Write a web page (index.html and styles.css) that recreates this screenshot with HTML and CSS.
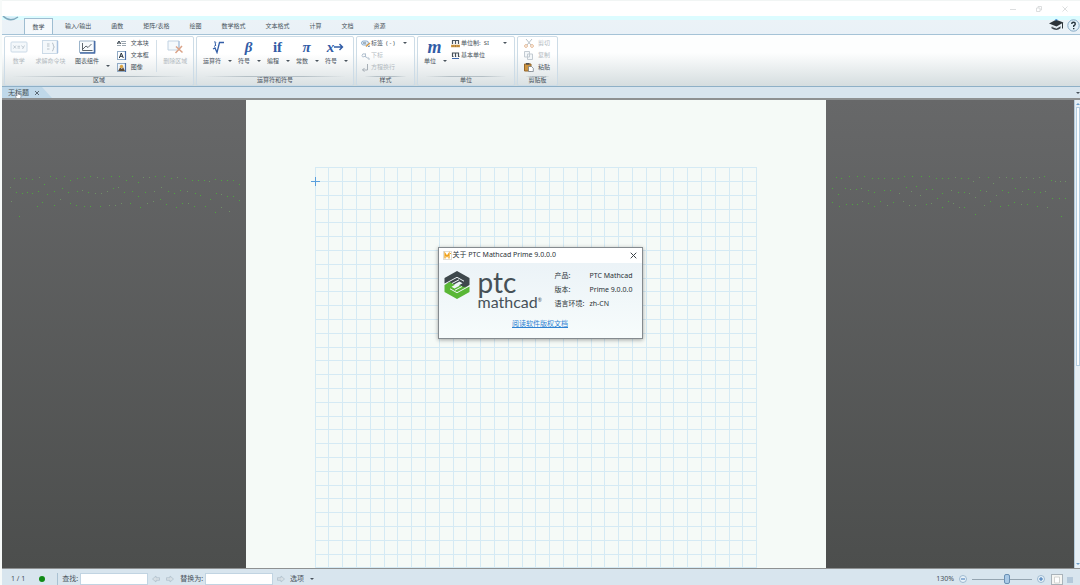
FILE: index.html
```html
<!DOCTYPE html>
<html lang="zh-CN">
<head>
<meta charset="utf-8">
<title>PTC Mathcad Prime</title>
<link rel="stylesheet" href="styles.css">
</head>
<body>
<div class="app">
  <header class="titlebar">
    <button class="win" aria-label="最小化"><svg width="6" height="6" viewBox="0 0 6 6"><path d="M0 3.5H6"/></svg></button>
    <button class="win" aria-label="还原"><svg width="6" height="6" viewBox="0 0 6 6"><path d="M.5 2H4V5.5H.5ZM2 2V.5H5.5V4H4"/></svg></button>
    <button class="win" aria-label="关闭"><svg width="6" height="6" viewBox="0 0 6 6"><path d="M.5.5 5.500 5.500M5.500.5.5 5.500"/></svg></button>
  </header>

  <nav class="tabs">
    <svg class="orb" width="18" height="6" viewBox="0 0 18 6"><path d="M1 0Q8 7 16 1" fill="#d5edf7" stroke="#7fa9bd" stroke-width="1.500"/></svg>
    <button class="tab active">数学</button>
    <button class="tab">输入/输出</button>
    <button class="tab">函数</button>
    <button class="tab">矩阵/表格</button>
    <button class="tab">绘图</button>
    <button class="tab">数学格式</button>
    <button class="tab">文本格式</button>
    <button class="tab">计算</button>
    <button class="tab">文档</button>
    <button class="tab">资源</button>
    <span class="spacer"></span>
    <button class="plain" aria-label="学习"><svg width="15" height="12" viewBox="0 0 15 12"><path d="M0 4.500 7 .8 14.500 3.500 7.500 7.500Z" fill="#2d3338"/><path d="M2.500 7 7.500 9.300 11.500 7V9.300Q7.500 12.500 2.500 9.300Z" fill="#3b4248"/><path d="M2 7.300 7.500 9.200 12 6.500" stroke="#eaf2f8" stroke-width=".8" fill="none"/><path d="M13.500 4V9.500" stroke="#2d3338" fill="none"/><path d="M6 1.300 7 .6 8.500 1" stroke="#3b86d8" fill="none"/></svg></button>
    <button class="plain" aria-label="帮助"><svg width="13" height="13" viewBox="0 0 13 13"><circle cx="6.500" cy="6.500" r="5.700" fill="#e3f0f9" stroke="#86a9c4"/><path d="M4.700 5Q4.700 3.300 6.500 3.300T8.300 5Q8.300 6 6.700 6.800V8M6.700 9V10.300" fill="none" stroke="#28353f" stroke-width="1.400"/></svg></button>
  </nav>

  <main class="ribbon">
    <section class="group g-region">
      <div class="tools">
        <button class="big w28 off"><svg width="18" height="14" viewBox="0 0 18 14"><rect x="1" y="2" width="16" height="10" rx="1" fill="#f4f8fb" stroke="#cbdae7"/><path d="M3.500 5.500 6 8.500M6 5.500 3.500 8.500M7.500 6.300H10M7.500 8H10M11.500 5.500 13 7.500M14.500 5.500 12.500 9" stroke="#b3bec8" fill="none" stroke-width=".8"/></svg><span>数学</span></button>
        <button class="big w36 off"><svg width="17" height="14" viewBox="0 0 17 14"><rect x=".5" y=".5" width="15" height="13" fill="#f4f8fb" stroke="#cbdae7"/><path d="M15.500 1V13" stroke="#a9c2df" stroke-width="1.500"/><path d="M5 4H7.500M5 6H7.500M5 9H7.500M10 3Q11.300 3 11.300 5T12.500 7Q11.300 7 11.300 9T10 11" stroke="#a9b4be" fill="none" stroke-width=".8"/></svg><span>求解命令块</span></button>
        <button class="big w40"><svg width="17" height="14" viewBox="0 0 17 14"><path d="M.5 1H16V12.500H.5Z" fill="#f8fbfd" stroke="#9db5cb"/><path d="M15.500 1V13H1" fill="none" stroke="#486da8" stroke-width="1.500"/><path d="M3.500 3V10.500H13.500M4 9 7 6 9 7.500 12.500 4" fill="none" stroke="#4d565e" stroke-width=".9"/></svg><span>图表组件</span></button>
        <i class="caret low"></i>
        <div class="stack s-text">
          <button class="small"><svg width="10" height="9" viewBox="0 0 10 9"><path d="M4 2.500H9M5 4.500H9M5 6.500H9M0 6.500H4" stroke="#99a5af"/><path d="M0 5 2 2 4 5M.8 4H3" stroke="#37424c" fill="none"/></svg>文本块</button>
          <button class="small"><svg width="10" height="9" viewBox="0 0 10 9"><rect x=".5" y=".5" width="8" height="8" fill="#fff" stroke="#91abc6"/><path d="M8.500 0V9" stroke="#486da8" stroke-width="1.200"/><path d="M2.300 7 4.300 2 6.300 7M3 5.300H5.600" stroke="#26313b" fill="none"/></svg>文本框</button>
          <button class="small"><svg width="10" height="9" viewBox="0 0 10 9"><rect x=".5" y=".5" width="8" height="8" fill="#eef3f8" stroke="#91abc6"/><path d="M8.500 0V9" stroke="#486da8" stroke-width="1.200"/><path d="M1 8 3 4.500 5 6 6 4 8 8Z" fill="#5b4a39"/><circle cx="4.500" cy="3.500" r="1.700" fill="#dca544"/></svg>图像</button>
        </div>
        <i class="rule"></i>
        <button class="big w36 off"><svg width="17" height="14" viewBox="0 0 17 14"><path d="M1 1H12V10H1Z" fill="#f5f9fc" stroke="#c1d2e2"/><path d="M12 1V10" stroke="#a0bad8"/><path d="M9 6.500 15.500 12.500M15 6 8.500 13" stroke="#dba388" stroke-width="1.500"/></svg><span>删除区域</span></button>
      </div>
      <h2>区域</h2>
    </section>

    <section class="group g-oper">
      <div class="tools">
        <button class="split w32"><svg width="16" height="14" viewBox="0 0 16 14"><path d="M3 9 5 8 7 12.500 9.500 2.500H14" fill="none" stroke="#345fa8" stroke-width="1.300"/><path d="M4 2Q7 1.500 5 4 7.500 5 4 6.500" fill="none" stroke="#345fa8"/></svg><span>运算符<i class="caret"></i></span></button>
        <button class="split"><b class="sym it">β</b><span>符号<i class="caret"></i></span></button>
        <button class="split"><b class="sym">if</b><span>编程<i class="caret"></i></span></button>
        <button class="split"><b class="sym it">π</b><span>常数<i class="caret"></i></span></button>
        <button class="split"><b class="sym"><em>x</em><svg width="10" height="8" viewBox="0 0 10 8"><path d="M0 4H8M5.500 1 8.500 4 5.500 7" fill="none" stroke="#315ca6" stroke-width="1.400"/></svg></b><span>符号<i class="caret"></i></span></button>
      </div>
      <h2>运算符和符号</h2>
    </section>

    <section class="group g-style">
      <div class="stack">
        <button class="small"><svg width="10" height="9" viewBox="0 0 10 9"><rect x=".5" y="2" width="7" height="4" rx="2" fill="#e3edf6" stroke="#8daed0"/><path d="M2 4H5" stroke="#627889"/><path d="M5 7.500 9 4" stroke="#d79d4b" stroke-width="1.500"/><path d="M7 7.500 9 7" stroke="#5482b8"/></svg>标签&nbsp; ( - )<i class="caret"></i></button>
        <button class="small off"><svg width="10" height="9" viewBox="0 0 10 9"><path d="M4.500 3Q1 2 1 4.500T4.500 5M4.500 2.500V6L6 6.500M7 6V8H9" fill="none" stroke="#b0bfce"/></svg>下标</button>
        <button class="small off"><svg width="10" height="9" viewBox="0 0 10 9"><path d="M6.500 1V7H1.500M3.500 5 1.500 7 3.500 8.500" fill="none" stroke="#a7afb6"/></svg>方程换行</button>
      </div>
      <h2>样式</h2>
    </section>

    <section class="group g-unit">
      <div class="tools">
        <button class="split"><b class="sym it">m</b><span>单位<i class="caret"></i></span></button>
        <div class="stack">
          <button class="small"><svg width="9" height="9" viewBox="0 0 9 9"><path d="M1.500 5V1.500H7.500V5M4.500 1.500V5" fill="none" stroke="#4a5560" stroke-width="1.200"/><path d="M0 7H9" stroke="#d29a44" stroke-width="2.500"/><path d="M2 6V8M4.500 6V8M7 6V8" stroke="#8a6a3c" stroke-width=".6"/></svg>单位制:&nbsp; SI<i class="caret"></i></button>
          <button class="small"><svg width="9" height="9" viewBox="0 0 9 9"><path d="M1.500 5.500V2H7.500V5.500M4.500 2V5.500M1 5.500H2.500M4 5.500H5.200M7 5.500H8.500" fill="none" stroke="#45505a" stroke-width="1.200"/><path d="M1 7.500H8" stroke="#3e68ad"/></svg>基本单位</button>
        </div>
      </div>
      <h2>单位</h2>
    </section>

    <section class="group g-clip">
      <div class="stack">
        <button class="small off"><svg width="10" height="9" viewBox="0 0 10 9"><path d="M2 0 7 6M8 0 3 6" stroke="#b6c0c8" fill="none"/><circle cx="2" cy="7" r="1.400" fill="none" stroke="#e4b894"/><circle cx="8" cy="7" r="1.400" fill="none" stroke="#e4b894"/></svg>剪切</button>
        <button class="small off"><svg width="10" height="9" viewBox="0 0 10 9"><path d="M.5.5H5.500V6H.5ZM3.500 3H8.500V8.500H3.500Z" fill="#f4f7f9" stroke="#c3cbd2"/></svg>复制</button>
        <button class="small"><svg width="10" height="9" viewBox="0 0 10 9"><path d="M.5 1H7V8H.5Z" fill="#cd9440" stroke="#94662a"/><path d="M2 .8H5.500" stroke="#4b4d50" stroke-width="1.500"/><path d="M4.500 3.500H7.500L9.300 5.300V8.500H4.500Z" fill="#fff" stroke="#68747f" stroke-width=".7"/></svg>粘贴</button>
      </div>
      <h2>剪贴板</h2>
    </section>
  </main>

  <div class="docbar">
    <div class="doctab">无标题<button class="plain" aria-label="关闭标签"><svg width="6" height="6" viewBox="0 0 6 6"><path d="M1 1 5 5M5 1 1 5" stroke="#4e5b66" fill="none" stroke-width=".9"/></svg></button>
      <svg class="hand" width="7" height="8" viewBox="0 0 7 8"><path d="M2 0H3V3L6 4V6L5 8H2L0 5V4L2 5Z" fill="#fff" stroke="#5b6268" stroke-width=".5"/></svg>
    </div>
    <i class="caret"></i>
  </div>

  <div class="work">
    <div class="gutter">
      <svg width="244" height="47" viewBox="6 40 732 141"><path class="dots" d="M42 55h3M60 55h3M78 55h3M96 58h3M132 73h3M150 49h3M168 55h3M192 49h3M210 61h3M231 55h3M252 52h3M270 49h3M309 55h3M333 49h3M357 49h3M378 61h3M396 49h3M414 67h3M465 49h3M492 49h3M513 55h3M555 55h3M576 61h3M594 61h3M612 61h3M645 58h3M663 61h3M681 61h3M699 61h3M717 73h3M48 97h3M66 100h3M81 97h3M96 100h3M114 94h3M141 103h3M162 94h3M186 85h3M204 97h3M231 94h3M264 97h3M339 85h3M372 97h3M396 94h3M414 109h3M435 97h3M504 94h3M522 100h3M540 91h3M585 100h3M600 106h3M630 118h3M648 100h3M681 109h3M699 109h3M717 121h3M57 169h3M111 139h3M126 127h3M162 136h3M210 130h3M228 136h3M252 139h3M270 139h3M300 139h3M390 130h3M420 142h3M480 118h3M498 133h3M528 142h3M546 130h3M582 139h3M615 139h3M645 157h3"/><path class="dots dim" d="M117 52h3M291 52h3M429 52h3M447 52h3M531 52h3M627 64h3M30 82h3M33 124h3M246 91h3M285 100h3M303 100h3M321 94h3M354 82h3M462 94h3M483 82h3M561 94h3M663 103h3M180 118h3M327 136h3M345 136h3M363 130h3M441 130h3M459 124h3M564 130h3M663 142h3M687 154h3"/></svg>
    </div>
    <article class="page">
      <div class="grid">
        <svg width="100%" height="100%"><defs><pattern id="cells" width="69" height="69" patternUnits="userSpaceOnUse"><path d="M.5 0V69M13.500 0V69M27.500 0V69M41.500 0V69M55.500 0V69M0 .5H69M0 14.500H69M0 28.500H69M0 42.500H69M0 55.500H69" stroke="#d5eaf4" fill="none"/></pattern></defs><rect width="100%" height="100%" fill="url(#cells)"/></svg>
        <svg class="cross" width="9" height="9" viewBox="0 0 9 9"><path d="M0 4.500H9M4.500 0V9" stroke="#5a9fdd"/></svg>
      </div>
    </article>
    <div class="gutter">
      <svg width="248" height="50" viewBox="378 70 744 150"><path class="dots" d="M408 82h3M423 85h3M447 79h3M471 79h3M492 79h3M516 85h3M534 85h3M552 85h3M576 85h3M594 85h3M612 79h3M636 79h3M663 79h3M687 79h3M708 85h3M726 85h3M744 85h3M783 85h3M804 85h3M864 82h3M936 85h3M1032 79h3M1053 91h3M396 115h3M414 133h3M435 115h3M468 118h3M504 121h3M522 127h3M552 121h3M570 121h3M618 112h3M648 109h3M678 118h3M696 118h3M726 130h3M774 127h3M792 127h3M840 121h3M906 121h3M924 127h3M945 115h3M984 118h3M1002 127h3M1020 127h3M1056 145h3M1077 145h3M1095 145h3M396 157h3M417 169h3M438 163h3M456 163h3M471 163h3M504 160h3M522 169h3M540 154h3M579 157h3M678 163h3M711 145h3M726 172h3M744 154h3M792 172h3M825 193h3M870 154h3M900 169h3M924 166h3M942 157h3M981 163h3M1011 169h3M1083 199h3"/><path class="dots dim" d="M765 82h3M819 94h3M837 82h3M879 100h3M897 82h3M918 82h3M960 82h3M978 82h3M999 85h3M1017 82h3M1065 94h3M1080 94h3M1095 94h3M450 118h3M483 115h3M597 130h3M633 124h3M660 136h3M753 121h3M807 130h3M825 142h3M858 124h3M888 136h3M966 124h3M1035 124h3M486 154h3M561 166h3M609 154h3M627 166h3M645 166h3M693 160h3M759 160h3M777 172h3M852 166h3M963 163h3M1041 172h3"/></svg>
    </div>
    <div class="scroll"><i class="caret up"></i><span class="thumb"></span><i class="caret blue"></i></div>
  </div>

  <footer class="status">
    <span class="pages">1 / 1</span><span class="led"></span><i class="sep"></i>
    <label for="find">查找:</label><input class="field" id="find" type="text">
    <button class="plain arrow" aria-label="上一个"><svg width="8" height="8" viewBox="0 0 8 8"><path d="M.5 4 4 1V2.700H7.500V5.300H4V7Z"/></svg></button>
    <button class="plain arrow" aria-label="下一个"><svg width="8" height="8" viewBox="0 0 8 8"><path d="M7.500 4 4 1V2.700H.5V5.300H4V7Z"/></svg></button>
    <label for="repl">替换为:</label><input class="field" id="repl" type="text">
    <button class="plain arrow" aria-label="替换"><svg width="8" height="8" viewBox="0 0 8 8"><path d="M7.500 4 4 1V2.700H.5V5.300H4V7Z"/></svg></button>
    <button class="plain options">选项<i class="caret"></i></button>
    <span class="spacer"></span>
    <label for="zoom">130%</label>
    <button class="plain zoombtn" aria-label="缩小"><svg width="8" height="8" viewBox="0 0 8 8"><circle cx="4" cy="4" r="3.500" fill="#e8f2f9" stroke="#9db9cf"/><path d="M2 4H6" stroke="#3a74b4"/></svg></button>
    <input class="zoom" id="zoom" type="range" min="0" max="100" value="60">
    <button class="plain zoombtn" aria-label="放大"><svg width="8" height="8" viewBox="0 0 8 8"><circle cx="4" cy="4" r="3.500" fill="#e8f2f9" stroke="#9db9cf"/><path d="M2 4H6M4 2V6" stroke="#3a74b4"/></svg></button>
    <button class="plain view on" aria-label="页面视图"><svg width="12" height="11" viewBox="0 0 12 11"><rect x=".5" y=".5" width="11" height="10" fill="#f6f6f3" stroke="#a9b3ba"/><path d="M3.500 3H8.500V9H3.500Z" fill="#fff" stroke="#d2d4d2"/></svg></button>
    <button class="plain view" aria-label="草稿视图"><svg width="12" height="11" viewBox="0 0 12 11"><rect x="3" y="3" width="6" height="6" fill="#b4c8da"/></svg></button>
  </footer>
</div>

<dialog class="about" open aria-labelledby="about-title">
  <div class="about-bar">
    <svg width="9" height="9" viewBox="0 0 9 9"><rect x=".5" y=".5" width="8" height="8" fill="#fff" stroke="#e0ddd5"/><path d="M2 7.500V2.500L4 5.500 6 2.500V7.500" fill="none" stroke="#efa21d" stroke-width="1.300"/><path d="M7 2.500H8" stroke="#efa21d"/></svg>
    <span id="about-title">关于 PTC Mathcad Prime 9.0.0.0</span>
    <button class="plain" aria-label="关闭"><svg width="7" height="7" viewBox="0 0 7 7"><path d="M.7.7 6.300 6.300M6.300.7.7 6.300" stroke="#3c4348" fill="none"/></svg></button>
  </div>
  <div class="about-body">
    <div class="brand">
      <svg width="26" height="28" viewBox="0 0 26 28"><path d="M13 0 25.500 7V14L20.500 17 15 14.200 18.500 12.200 15.500 10.500 9.500 13.800 6.500 12 .5 12.500V7Z" fill="#3e484c"/><path d="M13 28 .5 21V14L5.500 11 11 13.800 7.500 15.800 10.500 17.500 16.500 14.200 19.500 16 25.500 15.500V21Z" fill="#59b736"/><path d="M.5 13 13 6.300 20 10.200M25.500 15 13 21.700 6 17.800M8 12.500 15 8.800M18 15.500 11 19.200" fill="none" stroke="#eef4f7"/></svg>
      <div class="words"><span class="ptc">ptc</span><span class="mc">mathcad<sup>®</sup></span></div>
    </div>
    <dl class="facts">
      <dt>产品:</dt><dd>PTC Mathcad</dd>
      <dt>版本:</dt><dd>Prime 9.0.0.0</dd>
      <dt>语言环境:</dt><dd>zh-CN</dd>
    </dl>
  </div>
  <a class="legal" href="#copyright">阅读软件版权文档</a>
</dialog>
</body>
</html>
```
FILE: styles.css
```css
* { box-sizing: border-box; }
body {
  margin: 0;
  font: 6px/8px "Noto Sans", "Noto Sans CJK SC", sans-serif;
  color: #48525b;
  background: #f7faf9;
}
button {
  font: inherit;
  color: inherit;
  background: none;
  border: 0;
  padding: 0;
}
svg { display: block; flex: none; }
i { font-style: normal; }
.spacer { flex: 1; }
.plain { display: flex; align-items: center; }
.app {
  display: flex;
  flex-direction: column;
  height: 100vh;
  padding-left: 2px;
}
.caret {
  display: inline-block;
  flex: none;
  border: 2px solid transparent;
  border-top-color: #49535c;
  border-bottom: 0;
}

/* window title and ribbon tabs */
.titlebar {
  display: flex;
  justify-content: flex-end;
  align-items: center;
  gap: 20px;
  height: 16px;
  padding-right: 12px;
  background: #fff;
  border-top: 1px solid #f1f5f4;
}
.win svg { fill: none; stroke: #d3d6d7; stroke-width: 0.8; }
.tabs {
  display: flex;
  align-items: flex-end;
  height: 18px;
  background: linear-gradient(#dcfcff 0 4px, #ebf2f7 4px, #e9f1f7);
}
.orb { align-self: flex-start; width: 18px; margin-right: 4px; }
.tab { height: 16px; padding: 0 10px; line-height: 12px; }
.tab.active {
  width: 29px;
  padding: 0;
  margin-right: 2px;
  background: #f5f9fc;
  border: 1px solid #9fbdd1;
  border-bottom: 0;
}
.tabs .plain { align-self: center; margin-left: 3px; }

/* ribbon */
.ribbon {
  display: flex;
  gap: 2px;
  height: 53px;
  padding: 1px 2px 0;
  border-top: 1px solid #a5c3d7;
  border-bottom: 1px solid #8eb0c7;
  background: linear-gradient(#fdfefe 0 35%, #d5dddf);
}
.group {
  display: flex;
  flex-direction: column;
  height: 50px;
  border: 1px solid #cddce7;
  border-radius: 2px;
  background: linear-gradient(#fff 0 35%, #dae1e3);
}
.group h2 {
  margin: 0 8px;
  font: inherit;
  line-height: 7px;
  text-align: center;
  border-top: 1px solid;
  border-image: linear-gradient(90deg, transparent, #b4bfc5 30% 70%, transparent) 1;
}
.g-region { width: 190px; }
.g-oper { width: 158px; }
.g-style { width: 59px; }
.g-unit { width: 98px; }
.g-clip { width: 41px; }
.tools { display: flex; height: 39px; }
.stack {
  display: flex;
  flex-direction: column;
  height: 39px;
}
.big, .split {
  display: flex;
  flex-direction: column;
  align-items: center;
  gap: 3px;
  height: 30px;
  padding-top: 3px;
  white-space: nowrap;
}
.w28 { width: 28px; }
.w36 { width: 36px; }
.w40 { width: 38px; }
.split { width: 29px; }
.split.w32 { width: 32px; }
.split span {
  display: flex;
  align-items: center;
  justify-content: space-between;
  align-self: stretch;
  padding: 0 2px 0 4px;
}
.w32 span { padding-left: 1px; }
.off { color: #b3babf; }
.low { margin: 28px 7px 0 0; }
.rule { width: 1px; height: 32px; margin: 3px 0 0; background: #d3dfe8; }
.s-text { width: 40px; }
.small {
  display: flex;
  align-items: center;
  gap: 4px;
  height: 12px;
  white-space: nowrap;
}
.small .caret { margin-left: auto; }
.sym {
  display: flex;
  align-items: center;
  justify-content: center;
  height: 14px;
  font: bold 15px/14px "Liberation Serif", serif;
  color: #315ca6;
}
.it { font-style: italic; }
.g-oper .tools { padding-left: 5px; }
.g-style .stack { padding: 0 7px 0 4px; }
.g-style .small { gap: 0; }
.g-unit .tools { padding-left: 2px; }
.g-unit .sym { font-size: 18px; }
.g-unit .small { gap: 1px; }
.g-unit .stack { flex: 1; padding: 0 7px 0 2px; }
.g-clip .stack { padding-left: 6px; }

/* document tabs */
.docbar {
  display: flex;
  justify-content: space-between;
  align-items: center;
  height: 11px;
  background: #d8e5ee;
}
.doctab {
  position: relative;
  display: flex;
  align-items: center;
  gap: 5px;
  height: 11px;
  padding: 0 12px 0 6px;
  font-size: 7px;
  background: #bfd8e9;
  clip-path: polygon(0 0, 80% 0, 100% 100%, 0 100%);
}
.hand { position: absolute; left: 13px; top: 4px; }

/* worksheet */
.work {
  flex: 1;
  min-height: 0;
  display: grid;
  grid-template-columns: 61fr 580px 62fr 6px;
  background: linear-gradient(#676869, #4c4e4d);
  border-top: 2px solid #8e9192;
  border-bottom: 1px solid #8e9192;
}
.gutter { padding-top: 73px; overflow: hidden; }
.dots { stroke: #4fa63f; stroke-width: 3; shape-rendering: crispEdges; }
.dim { stroke: #6f8f66; }
.page {
  display: flex;
  min-height: 0;
  padding: 67px 69px 0;
  background: #f5faf7;
}
.grid { position: relative; flex: 1; }
.cross { position: absolute; left: -4px; top: 10px; }
.scroll {
  display: flex;
  flex-direction: column;
  align-items: center;
  gap: 2px;
  padding: 3px 0;
  background: #e6eff5;
  border-left: 1px solid #b7cddd;
}
.up { transform: rotate(180deg); }
.up, .blue { border-top-color: #6a9cc8; }
.thumb {
  width: 4px;
  height: 56%;
  margin-bottom: auto;
  background: #fbfdfe;
  border: 1px solid #b4cde0;
}

/* status bar */
.status {
  display: flex;
  align-items: center;
  height: 16px;
  padding: 4px 4px 0 9px;
  font-size: 7px;
  background: #d8e5ee;
}
.led {
  width: 6px;
  height: 6px;
  margin: 0 12px 0 14px;
  border-radius: 50%;
  background: #118a16;
}
.sep { width: 1px; height: 12px; margin-right: 4px; background: #a9c1d2; }
.field {
  width: 68px;
  height: 12px;
  margin: 0 4px 0 2px;
  padding: 0 2px;
  font: inherit;
  background: #fff;
  border: 1px solid #c1d4e2;
}
.arrow { margin-right: 6px; }
.arrow svg { fill: #d6dfe5; stroke: #adbdc9; stroke-width: 0.7; }
.options { gap: 6px; margin-left: -1px; }
.zoombtn { margin: 0 5px; }
.zoom {
  appearance: none;
  width: 60px;
  height: 11px;
  margin: 0;
  background: linear-gradient(#95a5b1, #95a5b1) center / 100% 1px no-repeat;
}
.zoom::-webkit-slider-thumb {
  appearance: none;
  width: 6px;
  height: 10px;
  background: #a9c9e6;
  border: 1px solid #6a90b4;
  border-radius: 2px;
}
.view { margin-left: 1px; }

/* about dialog */
.about {
  position: absolute;
  inset: 0;
  width: 205px;
  height: fit-content;
  margin: auto;
  padding: 0 0 9px;
  font-size: 7px;
  line-height: 10px;
  color: #2b3237;
  border: 1px solid #858b8f;
  background: linear-gradient(#e9f1f6, #f7fcfc);
  box-shadow: 0 1px 4px rgb(0 0 0 / 35%);
}
.about-bar {
  display: flex;
  align-items: center;
  gap: 1px;
  height: 15px;
  padding: 0 5px 0 4px;
  background: #fff;
}
.about-bar .plain { margin-left: auto; }
.about-body { display: flex; height: 56px; padding: 8px 5px 0; }
.brand { display: flex; gap: 8px; width: 111px; }
.words { display: flex; flex-direction: column; font-family: Lato, sans-serif; color: #465157; }
.ptc { font-size: 28px; line-height: 22px; }
.mc { font-size: 16px; line-height: 18px; white-space: nowrap; }
.mc sup { font-size: 5px; line-height: 5px; vertical-align: 6px; }
.facts {
  display: grid;
  grid-template-columns: 35px auto;
  align-content: start;
  row-gap: 4px;
  margin: 0;
  white-space: nowrap;
}
.facts dd { margin: 0; }
.legal { display: block; text-align: center; color: #2d82d2; }
```
